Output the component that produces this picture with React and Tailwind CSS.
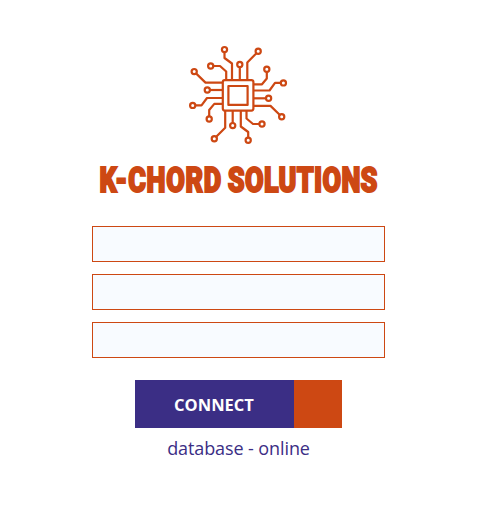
const NODES = [
  [224.5, 49.6], [210.7, 66], [194.2, 71.6], [207.3, 90],
  [258.2, 51.3], [239.8, 64.4], [266.8, 69.3], [283.4, 82.9],
  [192.7, 105.4], [209.2, 119], [214.3, 138.7], [232.7, 125.6],
  [268.6, 98.3], [281.7, 116.8], [262, 124], [248.2, 140.3],
];

const TRACES = [
  'M224.5 52.2V58L232 63.5V80',
  'M213.3 66H220L226.2 71.5V80',
  'M196 73.4L205.5 82.6H223',
  'M210 90H223',
  'M256.4 53.2L247.3 62.5V80',
  'M239.8 67V80',
  'M266.8 72V78.5L262 84.3H253.5',
  'M280.8 82.9H275L269.5 90.5H253.5',
  'M195.3 105.4H201.5L207 98H223',
  'M209.2 116.4V110L214.3 103.9H223',
  'M216.2 136.8L225.2 127.8V110.5',
  'M232.7 123V110.5',
  'M266 98.3H253.5',
  'M279.9 115L270.5 105.9H253.5',
  'M259.4 124H253L246.5 118.5V110.5',
  'M248.2 137.7V132L240.8 126.5V110.5',
];

function CircuitLogo() {
  return (
    <svg className="h-[102px] w-[103px]" viewBox="187 44 103 102" fill="none" stroke="#cd4813" strokeWidth="2.2" strokeLinejoin="round">
      {TRACES.map((d) => <path key={d} d={d} />)}
      {NODES.map(([x, y]) => <circle key={`${x}-${y}`} cx={x} cy={y} r="2.6" strokeWidth="2.2" />)}
      <rect x="222.8" y="80.1" width="30.6" height="30.5" rx="2" />
      <rect x="228.4" y="86" width="19.2" height="18.9" />
    </svg>
  );
}

export default function App() {
  return (
    <main className="flex h-[508px] w-[477px] flex-col items-center overflow-hidden bg-white pt-11">
      <CircuitLogo />
      <h1 className="mt-[15px] flex h-10 w-[279px] items-center justify-center">
        <span className="origin-center scale-x-[0.77] whitespace-nowrap font-['Roboto',sans-serif] text-[35px] leading-10 font-black text-[#cd4813] [-webkit-text-stroke:2px_#cd4813] [word-spacing:-1px]">
          <span className="tracking-[0.9px]">K-CHORD</span> <span className="tracking-[0.4px]">SOLUTIONS</span>
        </span>
      </h1>
      <form className="mt-[25px] flex w-[293px] flex-col items-center" onSubmit={(e) => e.preventDefault()}>
        <div className="flex w-[293px] flex-col gap-3">
          <input type="text" className="h-9 w-full border border-[#cd4813] bg-[#f8fbff] px-2 outline-none" />
          <input type="text" className="h-9 w-full border border-[#cd4813] bg-[#f8fbff] px-2 outline-none" />
          <input type="password" className="h-9 w-full border border-[#cd4813] bg-[#f8fbff] px-2 outline-none" />
        </div>
        <button type="submit" className="mt-[22px] flex h-12 w-[207px]">
          <span className="flex h-12 w-[159px] items-center justify-center bg-[#3b2e85] pt-0.5 pr-px font-['Open_Sans',sans-serif] text-[16.5px] font-bold text-white">CONNECT</span>
          <span className="h-12 w-12 bg-[#cd4813]" />
        </button>
      </form>
      <p className="mt-1.5 font-['Open_Sans',sans-serif] text-[18px] leading-7 tracking-[-0.1px] text-[#3b2e85]">database - online</p>
    </main>
  );
}
